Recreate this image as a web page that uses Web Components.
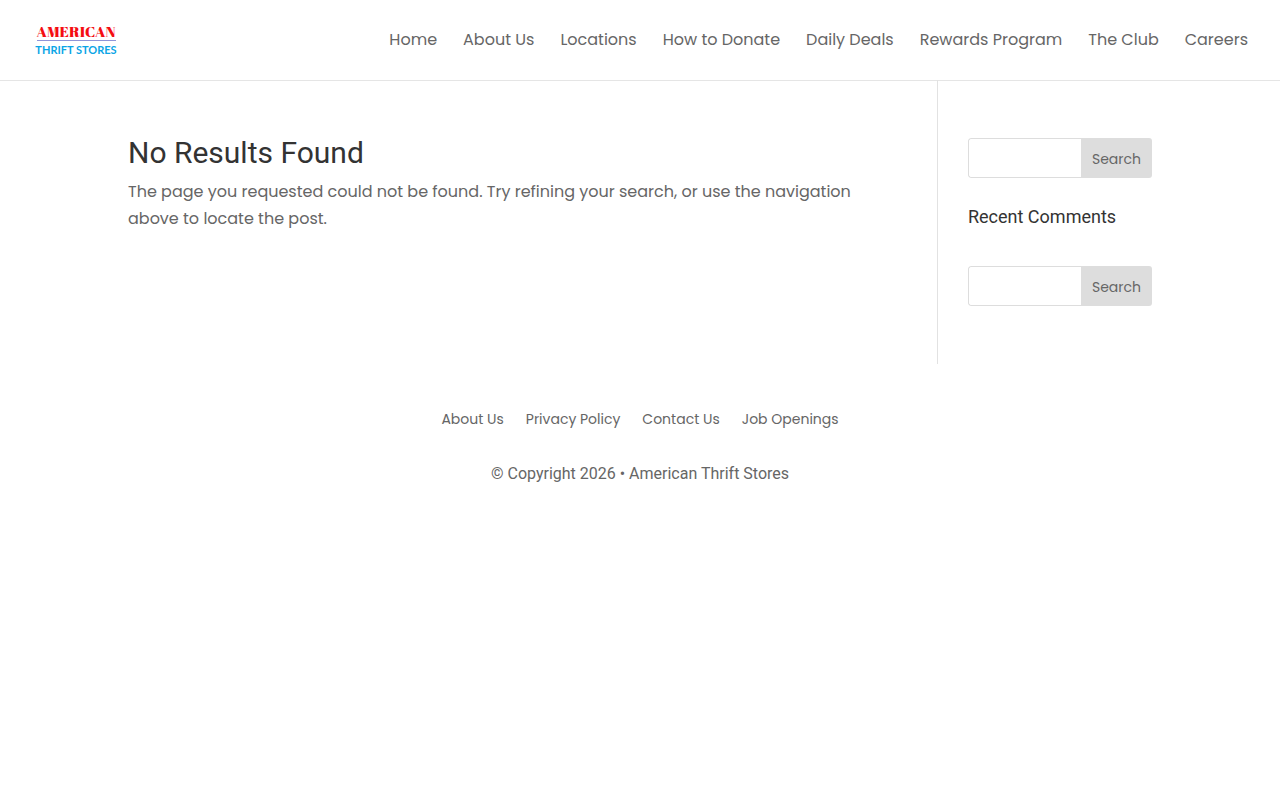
<!DOCTYPE html>
<html lang="en">
<head>
<meta charset="utf-8">
<meta name="viewport" content="width=device-width, initial-scale=1">
<title>Page not found | American Thrift Stores</title>
<style>
body { margin: 0; background: #fff; color: #666; font: 16px/27px Poppins, Inter, sans-serif; }
</style>
</head>
<body>
<site-header>
  <nav-link href="#home">Home</nav-link>
  <nav-link href="#about">About Us</nav-link>
  <nav-link href="#locations">Locations</nav-link>
  <nav-link href="#donate">How to Donate</nav-link>
  <nav-link href="#deals">Daily Deals</nav-link>
  <nav-link href="#rewards">Rewards Program</nav-link>
  <nav-link href="#club">The Club</nav-link>
  <nav-link href="#careers">Careers</nav-link>
</site-header>
<page-columns>
  <not-found></not-found>
  <search-form slot="side"></search-form>
  <side-title slot="side">Recent Comments</side-title>
  <search-form slot="side"></search-form>
</page-columns>
<site-footer>
  <nav-link href="#about">About Us</nav-link>
  <nav-link href="#privacy">Privacy Policy</nav-link>
  <nav-link href="#contact">Contact Us</nav-link>
  <nav-link href="#jobs">Job Openings</nav-link>
  <span slot="copyright">© Copyright 2026 • American Thrift Stores</span>
</site-footer>
<script>
const define = (name, html, init) => customElements.define(name, class extends HTMLElement {
  constructor() {
    super();
    this.attachShadow({ mode: 'open' }).innerHTML = html;
  }
  connectedCallback() { if (init) init(this, this.shadowRoot); }
});

define('nav-link', `
<style>
:host { display: block; white-space: nowrap; }
a { color: inherit; text-decoration: none; }
a:hover { opacity: .7; }
</style>
<a><slot></slot></a>`, (el, root) => { root.querySelector('a').href = el.getAttribute('href'); });

define('store-logo', `
<style>
:host { display: block; }
a { display: block; }
svg { display: block; }
</style>
<a href="#home" aria-label="American Thrift Stores">
<svg width="92" height="40" viewBox="0 0 92 40">
  <text x="46" y="17" text-anchor="middle" font-family="Abril Fatface, Liberation Serif, serif" font-weight="400" font-size="15" fill="#f40d12">AMERICAN</text>
  <path d="M7 20.5H86" stroke="#8f94d8"/>
  <text x="46" y="34" text-anchor="middle" font-family="Lato, sans-serif" font-weight="700" font-size="11" fill="#0ba5e6">THRIFT STORES</text>
</svg></a>`);

define('site-header', `
<style>
:host { display: block; box-shadow: 0 1px 0 rgba(0,0,0,.1); }
header { display: flex; justify-content: space-between; align-items: center; min-height: 80px; padding: 0 32px 0 30px; }
nav { display: flex; flex-wrap: wrap; gap: 0 26px; line-height: 26px; }
</style>
<header><store-logo></store-logo><nav aria-label="Main"><slot></slot></nav></header>`);

define('page-columns', `
<style>
:host { display: block; }
main { display: flex; width: 80%; max-width: 1080px; margin: 0 auto; }
section { flex: 1; padding: 58px 56px 0 0; }
aside { box-sizing: border-box; width: 21%; padding: 58px 0 58px 30px; border-left: 1px solid #e2e2e2; display: flex; flex-direction: column; gap: 30px; }
</style>
<main><section><slot></slot></section><aside><slot name="side"></slot></aside></main>`);

define('not-found', `
<style>
:host { display: block; }
h1 { margin: 0 0 10px; font: 400 30px/30px Roboto, sans-serif; color: #333; }
p { margin: 0; }
</style>
<h1>No Results Found</h1>
<p>The page you requested could not be found. Try refining your search, or use the navigation above to locate the post.</p>`);

define('search-form', `
<style>
:host { display: block; }
form { display: flex; height: 40px; border-radius: 3px; overflow: hidden; }
input { box-sizing: border-box; flex: 1; min-width: 0; margin: 0; padding: 0 8px; border: 1px solid #ddd; border-right: 0; border-radius: 3px 0 0 3px; background: #fff; color: #666; font: inherit; font-size: 14px; }
button { width: 71px; margin: 0; padding: 2px 0 0; border: 0; background: #ddd; color: #666; font: inherit; font-size: 14px; }
</style>
<form role="search"><input type="text" aria-label="Search for:"><button type="button">Search</button></form>`);

define('side-title', `
<style>
:host { display: block; }
h4 { margin: 0; padding-bottom: 10px; font: 400 18px/18px Roboto, sans-serif; color: #333; }
</style>
<h4><slot></slot></h4>`);

define('site-footer', `
<style>
:host { display: block; }
footer { display: flex; flex-direction: column; align-items: center; gap: 27px; padding: 42px 0; }
nav { display: flex; flex-wrap: wrap; gap: 0 22px; font-size: 14px; }
p { margin: 0; font-family: Roboto, sans-serif; }
</style>
<footer><nav aria-label="Footer"><slot></slot></nav><p><slot name="copyright"></slot></p></footer>`);
</script>
</body>
</html>
